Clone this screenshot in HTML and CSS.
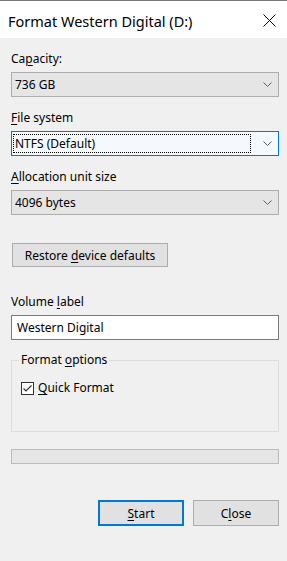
FILE: index.html
```html
<!DOCTYPE html>
<html lang="en">
<head>
  <meta charset="UTF-8" />
  <meta name="viewport" content="width=device-width, initial-scale=1.0" />
  <title>Format Western Digital (D:)</title>
  <link rel="stylesheet" href="styles.css">
</head>
<body>
  <div class="dialog">
    <header class="titlebar">
      <span class="title">Format Western Digital (D:)</span>
      <svg class="close-x" width="13" height="13" viewBox="0 0 13 13">
        <path d="M0.5 0.5 L12.5 12.5 M12.5 0.5 L0.5 12.5" stroke="#000" stroke-width="1" fill="none" />
      </svg>
    </header>

    <main class="content">
      <div class="field">
        <label>Ca<u>p</u>acity:</label>
        <div class="combo">
          <span>736 GB</span>
          <svg class="chevron" width="9" height="5" viewBox="0 0 9 5"><path d="M0.5 0.5 L4.5 4.5 L8.5 0.5" stroke="#606060" fill="none" /></svg>
        </div>
      </div>

      <div class="field">
        <label><u>F</u>ile system</label>
        <div class="combo focused">
          <span class="focus-rect">NTFS (Default)</span>
          <svg class="chevron" width="9" height="5" viewBox="0 0 9 5"><path d="M0.5 0.5 L4.5 4.5 L8.5 0.5" stroke="#606060" fill="none" /></svg>
        </div>
      </div>

      <div class="field">
        <label><u>A</u>llocation unit size</label>
        <div class="combo">
          <span>4096 bytes</span>
          <svg class="chevron" width="9" height="5" viewBox="0 0 9 5"><path d="M0.5 0.5 L4.5 4.5 L8.5 0.5" stroke="#606060" fill="none" /></svg>
        </div>
      </div>

      <button class="btn restore">Restore <u>d</u>evice defaults</button>

      <div class="field volume">
        <label>Volume <u>l</u>abel</label>
        <div class="textbox">Western Digital</div>
      </div>

      <fieldset class="group">
        <legend>Format <u>o</u>ptions</legend>
        <div class="check-row">
          <span class="checkbox">
            <svg width="11" height="11" viewBox="0 0 11 11"><path d="M1.5 5.5 L4 8 L9.5 2.5" stroke="#333" stroke-width="1.2" fill="none" /></svg>
          </span>
          <span><u>Q</u>uick Format</span>
        </div>
      </fieldset>

      <div class="progress"></div>

      <div class="actions">
        <button class="btn primary"><u>S</u>tart</button>
        <button class="btn">C<u>l</u>ose</button>
      </div>
    </main>
  </div>
</body>
</html>
```

FILE: styles.css
```css
body { margin: 0; background: #f0f0f0; font-family: "Noto Sans", "Liberation Sans", sans-serif; font-size: 12px; color: #000; }
.dialog { width: 287px; height: 561px; background: #f0f0f0; }
.titlebar { height: 38px; box-sizing: border-box; background: #fff; border-top: 1px solid #7a7a7a; display: flex; align-items: center; justify-content: space-between; padding: 0 11px 0 8px; }
.title { font-size: 14.5px; line-height: 20px; margin-top: 2px; }
.close-x { display: block; margin-top: 1px; }
.content { padding: 13px 8px 0 11px; }
.field { margin-bottom: 13px; }
.field label { display: block; line-height: 16px; margin-bottom: 5px; }
.combo { height: 25px; box-sizing: border-box; border: 1px solid #adadad; background: #e5e5e5; display: flex; align-items: center; justify-content: space-between; padding: 0 6px 0 3px; }
.combo.focused { border-color: #0078d7; background: #f4f9fd; padding-left: 1px; }
.focus-rect { flex: 1; border: 1px dotted #000; line-height: 17px; padding-left: 1px; margin-right: 12px; }
.chevron { display: block; }
.btn { font-family: inherit; font-size: 12px; background: #e1e1e1; border: 1px solid #adadad; height: 26px; padding: 0; color: #000; }
.restore { width: 156px; height: 24px; margin: 28px 0 0 1px; display: block; }
.field.volume { margin-top: 27px; margin-bottom: 12px; }
.textbox { height: 25px; box-sizing: border-box; border: 1px solid #7a7a7a; background: #fff; line-height: 23px; padding-left: 5px; }
.group { margin: 0; border: 1px solid #dcdcdc; padding: 12px 9px 35px; }
.group legend { padding: 0 2px; margin-left: -2px; line-height: 16px; }
.check-row { display: flex; align-items: center; gap: 4px; line-height: 16px; }
.checkbox { width: 13px; height: 13px; box-sizing: border-box; border: 1px solid #333; background: #fff; display: flex; align-items: center; justify-content: center; }
.checkbox svg { display: block; }
.progress { height: 15px; box-sizing: border-box; border: 1px solid #bcbcbc; background: #e6e6e6; margin-top: 17px; }
.actions { display: flex; justify-content: flex-end; gap: 9px; margin-top: 36px; }
.actions .btn { width: 86px; }
.primary { border: 2px solid #0078d7; }
u { text-decoration-thickness: 1px; text-underline-offset: 2px; }
```
